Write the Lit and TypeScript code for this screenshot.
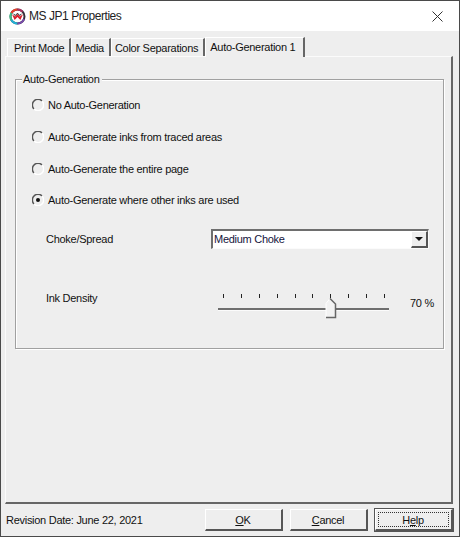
import { LitElement, html, css, svg } from "lit";
import { customElement } from "lit/decorators.js";

const RADIOS = [
  ["No Auto-Generation", false],
  ["Auto-Generate inks from traced areas", false],
  ["Auto-Generate the entire page", false],
  ["Auto-Generate where other inks are used", true],
] as const;

@customElement("app-root")
export class AppRoot extends LitElement {
  static styles = css`
    :host {
      display: block;
      width: 460px;
      height: 537px;
      font-family: "Liberation Sans", Arial, sans-serif;
      font-size: 11px;
      letter-spacing: -0.28px;
      color: #111;
    }
    * { box-sizing: border-box; }
    .win {
      width: 460px;
      height: 537px;
      border: 1px solid #4a4a4a;
      background: #eeeeee;
      display: flex;
      flex-direction: column;
    }
    .title {
      height: 30px;
      background: #fff;
      display: flex;
      align-items: center;
      padding: 0 16px 0 8px;
      flex: none;
    }
    .logo { width: 17px; height: 17px; margin-right: 3px; flex: none; }
    .title-text { font-size: 12px; letter-spacing: -0.45px; flex: 1; color: #222; }
    .close { width: 11px; height: 11px; }
    .content {
      flex: 1;
      display: flex;
      flex-direction: column;
      padding: 5px 6px 4px 4px;
      min-height: 0;
    }
    .tabs {
      display: flex;
      height: 21px;
      flex: none;
      align-items: flex-end;
      padding-left: 2px;
    }
    .tab {
      height: 18px;
      padding: 0 5px 0 3px;
      margin-bottom: 1px;
      display: flex;
      align-items: center;
      border-top: 1px solid #fff;
      border-left: 1px solid #fff;
      border-right: 2px solid #666;
      background: #eee;
      white-space: nowrap;
    }
    .tab:first-child { padding-left: 6px; }
    .tab.active {
      height: 20px;
      margin-bottom: 0;
      padding: 0 8px 2px 4px;
      position: relative;
      z-index: 1;
    }
    .pane {
      flex: 1;
      min-height: 0;
      border-top: 1px solid #fbfbfb;
      border-left: 1px solid #fbfbfb;
      border-right: 2px solid #666;
      border-bottom: 2px solid #666;
      padding: 22px 7px 0 9px;
      margin-top: -1px;
    }
    .group {
      position: relative;
      height: 270px;
      border: 1px solid #a0a0a0;
      box-shadow: inset 1px 1px 0 #fff, 1px 1px 0 #fff;
      padding: 18px 13px 0 16px;
      display: flex;
      flex-direction: column;
    }
    .legend {
      position: absolute;
      left: 6px;
      top: -7px;
      background: #eee;
      padding: 0 2px 0 1px;
      line-height: 13px;
    }
    .radios { display: flex; flex-direction: column; gap: 18px; }
    .radio { display: flex; align-items: center; gap: 4px; height: 14px; }
    .radio:last-child { margin-top: -1px; }
    .radio svg { width: 12px; height: 12px; flex: none; }
    .row {
      display: flex;
      align-items: center;
      margin-left: 14px;
    }
    .choke { margin-top: 22px; height: 20px; }
    .label1 { width: 165px; flex: none; }
    .select {
      width: 218px;
      height: 20px;
      background: #fff;
      border-top: 2px solid #6e6e6e;
      border-left: 2px solid #6e6e6e;
      border-right: 1px solid #fbfbfb;
      border-bottom: 1px solid #fbfbfb;
      display: flex;
      align-items: center;
      padding-left: 1px;
    }
    .select-text { flex: 1; color: #14143c; padding-bottom: 2px; }
    .arrow {
      width: 17px;
      height: 17px;
      background: #eee;
      border-right: 2px solid #555;
      border-bottom: 2px solid #555;
      border-top: 1px solid #fff;
      border-left: 1px solid #fff;
      display: flex;
      align-items: center;
      justify-content: center;
    }
    .tri {
      width: 0;
      height: 0;
      border-left: 4px solid transparent;
      border-right: 4px solid transparent;
      border-top: 4px solid #111;
    }
    .density { margin-top: 40px; height: 32px; align-items: flex-start; }
    .density-label { width: 172px; flex: none; padding-top: 3px; }
    .slider { position: relative; width: 171px; height: 32px; flex: none; margin-top: 5px; }
    .ticks {
      display: flex;
      justify-content: space-between;
      padding: 0 4px 0 5px;
      height: 5px;
    }
    .tick { width: 1px; height: 4px; background: #222; }
    .track {
      position: absolute;
      left: 0;
      right: 0;
      top: 14px;
      height: 2px;
      background: #6e6e6e;
      box-shadow: 0 1px 0 #fbfbfb;
    }
    .thumb { position: absolute; left: 107px; top: 3px; width: 12px; height: 22px; }
    .value { margin-left: 21px; padding-top: 8px; white-space: nowrap; flex: none; }
    .footer {
      flex: none;
      display: flex;
      align-items: center;
      height: 28px;
      padding: 4px 0 0 1px;
    }
    .rev { flex: 1; }
    .buttons { display: flex; gap: 7px; }
    .btn {
      width: 78px;
      height: 22px;
      border-top: 1px solid #fff;
      border-left: 1px solid #fff;
      border-right: 2px solid #555;
      border-bottom: 2px solid #555;
      display: flex;
      align-items: center;
      justify-content: center;
      background: #eee;
      padding-right: 1px;
    }
    .btn u { text-underline-offset: 1px; }
    .btn.def {
      outline: 1px solid #555;
      position: relative;
    }
    .focus {
      position: absolute;
      inset: 2px;
      border: 1px dotted #333;
    }
  `;

  render() {
    const ticks = Array.from({ length: 10 });
    return html`
      <div class="win">
        <div class="title">
          <svg class="logo" viewBox="0 0 17 17">
            <circle cx="8.5" cy="8.5" r="7" fill="#fff" stroke="#35303a" stroke-width="2"></circle>
            <path d="M2.4 5A7 7 0 0 1 8.5 1.5" fill="none" stroke="#e8402a" stroke-width="2"></path>
            <path d="M8.5 1.5A7 7 0 0 1 13.5 3.6" fill="none" stroke="#b03060" stroke-width="2"></path>
            <path d="M2.4 5A7 7 0 0 0 2.4 12" fill="none" stroke="#42c08a" stroke-width="2"></path>
            <path d="M2.4 12A7 7 0 0 0 8.5 15.5" fill="none" stroke="#22b4d8" stroke-width="2"></path>
            <path d="M8.5 15.5A7 7 0 0 0 15 11" fill="none" stroke="#7a4ab0" stroke-width="2"></path>
            <path d="M3 6.2L5.6 12L8.5 9L11.4 12L14 6.2L10.8 8.4L8.5 6L6.2 8.4Z" fill="#d8202a"></path>
            <path d="M4.6 5.8L6.2 7.6L8.5 5.2L10.8 7.6L12.4 5.8" fill="none" stroke="#222" stroke-width="1"></path>
          </svg>
          <span class="title-text">MS JP1 Properties</span>
          <svg class="close" viewBox="0 0 11 11">
            <path d="M.5 .5L10.5 10.5M10.5 .5L.5 10.5" stroke="#333" stroke-width="1" fill="none"></path>
          </svg>
        </div>
        <div class="content">
          <div class="tabs">
            <div class="tab">Print Mode</div>
            <div class="tab">Media</div>
            <div class="tab">Color Separations</div>
            <div class="tab active">Auto-Generation 1</div>
          </div>
          <div class="pane">
            <div class="group">
              <div class="legend">Auto-Generation</div>
              <div class="radios">
                ${RADIOS.map(
                  ([t, on]) => html`
                    <div class="radio">
                      <svg viewBox="0 0 12 12">
                        <path d="M2 10A5.4 5.4 0 0 1 10 2" fill="none" stroke="#555" stroke-width="1.5"></path>
                        <path d="M2 10A5.4 5.4 0 0 0 10 2" fill="none" stroke="#fff" stroke-width="1.5"></path>
                        ${on ? svg`<circle cx="6" cy="6" r="2" fill="#111"></circle>` : ""}
                      </svg>
                      <span>${t}</span>
                    </div>
                  `
                )}
              </div>
              <div class="row choke">
                <span class="label1">Choke/Spread</span>
                <div class="select">
                  <span class="select-text">Medium Choke</span>
                  <div class="arrow"><div class="tri"></div></div>
                </div>
              </div>
              <div class="row density">
                <span class="density-label">Ink Density</span>
                <div class="slider">
                  <div class="ticks">${ticks.map(() => html`<div class="tick"></div>`)}</div>
                  <div class="track"></div>
                  <svg class="thumb" viewBox="0 0 12 22">
                    <path d="M1 20.5V6.5L5 1.5L10.5 7V20.5Z" fill="#f2f2f2"></path>
                    <path d="M1 20.5V6.5L5 1.5" fill="none" stroke="#fff"></path>
                    <path d="M5 1.5L10.5 7V20.5H1" fill="none" stroke="#666" stroke-width="1.5"></path>
                  </svg>
                </div>
                <span class="value">70 %</span>
              </div>
            </div>
          </div>
          <div class="footer">
            <span class="rev">Revision Date: June 22, 2021</span>
            <div class="buttons">
              <div class="btn"><span><u>O</u>K</span></div>
              <div class="btn"><span><u>C</u>ancel</span></div>
              <div class="btn def"><div class="focus"></div><span>H<u>e</u>lp</span></div>
            </div>
          </div>
        </div>
      </div>
    `;
  }
}
